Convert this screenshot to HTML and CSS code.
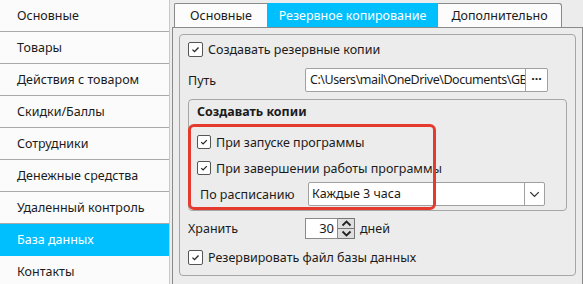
FILE: index.html
```html
<!DOCTYPE html>
<html lang="ru">
<head>
<meta charset="utf-8">
<link rel="stylesheet" href="styles.css">
</head>
<body>
<div class="app">
  <nav class="sidebar">
    <div class="nav-item">Основные</div>
    <div class="nav-item">Товары</div>
    <div class="nav-item">Действия с товаром</div>
    <div class="nav-item">Скидки/Баллы</div>
    <div class="nav-item">Сотрудники</div>
    <div class="nav-item">Денежные средства</div>
    <div class="nav-item">Удаленный контроль</div>
    <div class="nav-item active">База данных</div>
    <div class="nav-item">Контакты</div>
  </nav>
  <main class="main">
    <div class="tabs">
      <div class="tab tab-first">Основные</div>
      <div class="tab tab-active">Резервное копирование</div>
      <div class="tab tab-last">Дополнительно</div>
    </div>
    <div class="panel">
      <div class="group">
        <label class="check-row row-create">
          <span class="box"><svg viewBox="0 0 15 15" width="15" height="15"><path d="M4 7.6 L6.4 10 L11 5.2" fill="none" stroke="#222" stroke-width="1.5"/></svg></span>
          <span>Создавать резервные копии</span>
        </label>
        <div class="field-row row-path">
          <span class="label">Путь</span>
          <div class="path-input">
            <span class="path-clip"><span class="path-text">C:\Users\mail\OneDrive\Documents\GBS</span></span>
            <span class="path-btn">···</span>
          </div>
        </div>
        <fieldset class="inner">
          <div class="inner-title">Создавать копии</div>
          <label class="check-row row-start">
            <span class="box"><svg viewBox="0 0 15 15" width="14" height="14"><path d="M4 7.6 L6.4 10 L11 5.2" fill="none" stroke="#222" stroke-width="1.5"/></svg></span>
            <span>При запуске программы</span>
          </label>
          <label class="check-row row-end">
            <span class="box"><svg viewBox="0 0 15 15" width="14" height="14"><path d="M4 7.6 L6.4 10 L11 5.2" fill="none" stroke="#222" stroke-width="1.5"/></svg></span>
            <span>При завершении работы программы</span>
          </label>
          <div class="field-row row-sched">
            <span class="label sched-label">По расписанию</span>
            <div class="combo">
              <span class="combo-text">Каждые 3 часа</span>
              <span class="combo-btn"><svg viewBox="0 0 20 22" width="20" height="22"><path d="M5.5 9 L10 13.5 L14.5 9" fill="none" stroke="#333" stroke-width="1.4"/></svg></span>
            </div>
          </div>
          <div class="highlight"></div>
        </fieldset>
        <div class="field-row row-keep">
          <span class="label">Хранить</span>
          <div class="spin">
            <span class="spin-val">30</span>
            <span class="spin-btns">
              <span class="spin-b"><svg viewBox="0 0 15 9" width="15" height="9"><path d="M3.5 6.5 L7.5 2.5 L11.5 6.5" fill="none" stroke="#222" stroke-width="1.8"/></svg></span>
              <span class="spin-b"><svg viewBox="0 0 15 9" width="15" height="9"><path d="M3.5 2.5 L7.5 6.5 L11.5 2.5" fill="none" stroke="#222" stroke-width="1.8"/></svg></span>
            </span>
          </div>
          <span class="unit">дней</span>
        </div>
        <label class="check-row row-db">
          <span class="box"><svg viewBox="0 0 15 15" width="15" height="15"><path d="M4 7.6 L6.4 10 L11 5.2" fill="none" stroke="#222" stroke-width="1.5"/></svg></span>
          <span>Резервировать файл базы данных</span>
        </label>
      </div>
    </div>
  </main>
</div>
</body>
</html>
```
FILE: styles.css
```css
* { box-sizing: border-box; }
html, body {
  margin: 0;
  padding: 0;
  width: 583px;
  height: 284px;
  overflow: hidden;
  background: #ececec;
  font-family: "Noto Sans", "Open Sans", sans-serif;
  font-size: 12.5px;
  color: #1b1b1b;
}
.app {
  display: flex;
  width: 583px;
  height: 284px;
}
.sidebar {
  width: 170px;
  flex: none;
  background: #fbfbfb;
  border-right: 1px solid #c8c8c8;
  display: flex;
  flex-direction: column;
}
.nav-item {
  height: 32px;
  flex: none;
  padding-left: 17px;
  display: flex;
  align-items: center;
  border-bottom: 1px solid #a9a9a9;
}
.nav-item.active {
  background: #00bfff;
  color: #fff;
  border-bottom-color: #00bfff;
}
.main {
  flex: 1;
  padding-left: 2px;
  display: flex;
  flex-direction: column;
  min-width: 0;
}
.tabs {
  display: flex;
  height: 27px;
  padding-top: 3px;
  padding-left: 2px;
  flex: none;
}
.tab {
  height: 24px;
  display: flex;
  align-items: center;
  justify-content: center;
  background: #fcfcfc;
  border: 1px solid #8a8a8a;
  border-bottom: none;
}
.tab-first { width: 93px; border-radius: 2px 0 0 0; border-right: none; }
.tab-active { width: 171px; background: #00bfff; color: #fff; border-color: #00bfff; }
.tab-last { width: 124px; border-left: none; border-radius: 0 3px 0 0; }
.panel {
  flex: 1;
  border: 1px solid #8a8a8a;
  border-bottom: none;
  padding: 6px 6px 0 6px;
  width: 411px;
}
.group {
  position: relative;
  height: 242px;
  border: 1px solid #a6a6a6;
  border-radius: 4px;
  padding: 0 8px;
  display: flex;
  flex-direction: column;
}
.check-row {
  display: flex;
  align-items: center;
  gap: 5px;
}
.box {
  width: 15px;
  height: 15px;
  border: 1px solid #555;
  border-radius: 2px;
  background: #fff;
  display: flex;
  align-items: center;
  justify-content: center;
  flex: none;
}
.box svg { display: block; }
.row-create { margin-top: 6px; height: 16px; }
.field-row {
  display: flex;
  align-items: center;
}
.label { width: 117px; flex: none; }
.row-path { margin-top: 11px; height: 24px; }
.path-input {
  width: 243px;
  height: 24px;
  display: flex;
  background: #fff;
  border: 1px solid #a0a0a0;
  border-radius: 2px;
}
.path-clip {
  flex: 1;
  min-width: 0;
  overflow: hidden;
  white-space: nowrap;
  padding-left: 4px;
  line-height: 22px;
}
.path-text {
  letter-spacing: -0.45px;
}
.path-btn {
  width: 22px;
  flex: none;
  border-left: 1px solid #a0a0a0;
  text-align: center;
  line-height: 20px;
  font-weight: bold;
}
.inner {
  position: relative;
  margin: 7px 0 0 0;
  padding: 0 8px;
  height: 112px;
  width: 379px;
  border: 1px solid #a6a6a6;
  border-radius: 4px;
  display: flex;
  flex-direction: column;
  min-width: 0;
}
.inner-title {
  font-weight: bold;
  margin-top: 3px;
  height: 17px;
  line-height: 17px;
}
.inner .box { width: 14px; height: 14px; }
.row-start { margin-top: 15px; height: 14px; }
.row-end { margin-top: 12px; height: 14px; }
.row-sched { margin-top: 7px; height: 24px; }
.sched-label { width: 111px; padding-left: 3px; }
.combo {
  width: 237px;
  height: 24px;
  display: flex;
  background: #fff;
  border: 1px solid #a0a0a0;
  border-radius: 2px;
}
.combo-text { flex: 1; padding-left: 3px; line-height: 22px; }
.combo-btn {
  width: 20px;
  border-left: 1px solid #a0a0a0;
  display: flex;
  align-items: center;
  justify-content: center;
}
.highlight {
  position: absolute;
  left: -1px;
  top: 24px;
  width: 248px;
  height: 86px;
  border: 3.5px solid #e53b2f;
  border-radius: 6px;
  pointer-events: none;
}
.row-keep { margin-top: 7px; height: 21px; }
.spin {
  display: flex;
  height: 21px;
}
.spin-val {
  width: 33px;
  background: #fff;
  border: 1px solid #8a8a8a;
  text-align: right;
  padding-right: 3px;
  line-height: 19px;
  font-size: 13px;
}
.spin-btns {
  width: 17px;
  display: flex;
  flex-direction: column;
  border: 1px solid #777;
  border-left: none;
  background: #dedede;
}
.spin-b {
  flex: 1;
  display: flex;
  align-items: center;
  justify-content: center;
}
.spin-b:first-child { border-bottom: 1px solid #777; }
.unit { margin-left: 5px; }
.row-db { margin-top: 10px; height: 16px; }
```
